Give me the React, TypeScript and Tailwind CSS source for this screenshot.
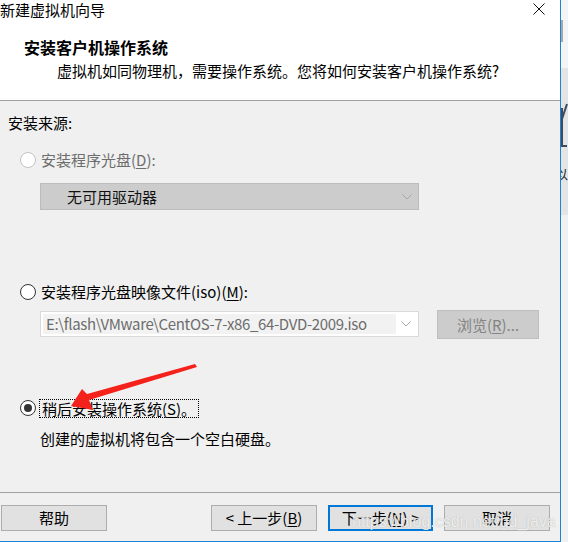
import React from "react";

const U = ({ c }: { c: string }) => <span className="underline underline-offset-2">{c}</span>;

function Radio({ state }: { state: "disabled" | "off" | "on" }) {
  if (state === "disabled")
    return <span className="w-4 h-4 rounded-full border border-[#c4c4c4] bg-white shrink-0" />;
  if (state === "off")
    return <span className="w-4 h-4 rounded-full border border-[#333333] bg-white shrink-0" />;
  return (
    <span className="w-4 h-4 rounded-full border border-[#333333] bg-white shrink-0 flex items-center justify-center">
      <span className="w-2 h-2 rounded-full bg-[#333333]" />
    </span>
  );
}

function Chevron() {
  return (
    <svg width="10" height="6" viewBox="0 0 10 6" className="shrink-0">
      <path d="M0.5 0.5 L5 5 L9.5 0.5" fill="none" stroke="#a8a8a8" strokeWidth="1" />
    </svg>
  );
}

export default function App() {
  return (
    <div
      className="relative w-[568px] h-[542px] flex overflow-hidden bg-[#f0f0f0] text-[15px] text-black"
      style={{ fontFamily: "'Noto Sans CJK SC', 'Noto Sans', sans-serif" }}
    >
      {/* dialog window */}
      <div className="w-[561px] h-[542px] flex flex-col border-r border-b border-[#1883d7] shrink-0">
        {/* header */}
        <div className="h-[100px] bg-white flex flex-col shrink-0">
          <div className="h-[19px] flex items-start justify-between pr-[15px]">
            <span className="leading-[19px]">新建虚拟机向导</span>
            <svg width="12" height="12" viewBox="0 0 12 12" className="mt-[3px]">
              <path d="M0.5 0.5 L11.5 11.5 M11.5 0.5 L0.5 11.5" stroke="#111" strokeWidth="1" fill="none" />
            </svg>
          </div>
          <div className="mt-[18px] pl-[24px] h-[20px] leading-[20px] text-[16px] font-bold">安装客户机操作系统</div>
          <div className="mt-[4px] pl-[57px] h-[20px] leading-[20px]">
            虚拟机如同物理机，需要操作系统。您将如何安装客户机操作系统?
          </div>
        </div>
        <div className="h-px bg-[#a0a0a0] shrink-0" />

        {/* body */}
        <div className="flex-1 flex flex-col">
          <div className="mt-[13px] pl-[8px] h-[18px] leading-[18px]">安装来源:</div>

          <div className="mt-[20px] pl-[20px] h-4 flex items-center gap-[5px]">
            <Radio state="disabled" />
            <span className="leading-[18px] text-[#6d6d6d]">
              安装程序光盘(<U c="D" />):
            </span>
          </div>

          <div className="mt-[15px] ml-[40px] w-[379px] h-[27px] bg-[#cccccc] border border-[#bcbcbc] flex items-center pl-[26px] pr-[6px]">
            <span className="flex-1 leading-[18px] text-[#111]">无可用驱动器</span>
            <Chevron />
          </div>

          <div className="mt-[74px] pl-[20px] h-4 flex items-center gap-[5px]">
            <Radio state="off" />
            <span className="leading-[18px]">
              安装程序光盘映像文件(iso)(<U c="M" />):
            </span>
          </div>

          <div className="mt-[10px] h-[29px] flex items-start">
            <div className="ml-[40px] mt-px w-[379px] h-[26px] border border-[#d9d9d9] bg-white p-[2px] flex">
              <div className="w-[353px] bg-[#f2f2f2] flex items-center pl-[3px] text-[#6d6d6d] leading-[18px] tracking-[-0.35px]">
                E:\flash\VMware\CentOS-7-x86_64-DVD-2009.iso
              </div>
              <div className="flex-1 flex items-center justify-center">
                <Chevron />
              </div>
            </div>
            <div className="ml-[18px] w-[102px] h-[29px] bg-[#cccccc] border border-[#bfbfbf] flex items-center justify-center text-[#838383] leading-[18px]">
              浏览(<U c="R" />)...
            </div>
          </div>

          <div className="mt-[59px] pl-[20px] h-[20px] flex items-center gap-[3px]">
            <Radio state="on" />
            <span className="border border-dotted border-black px-[2px] h-[19px] leading-[17px] flex items-center">
              稍后安装操作系统(<U c="S" />)。
            </span>
          </div>

          <div className="mt-[12px] pl-[40px] h-[18px] leading-[18px]">创建的虚拟机将包含一个空白硬盘。</div>
        </div>

        <div className="h-px bg-[#a0a0a0] shrink-0" />

        {/* buttons */}
        <div className="h-[48px] shrink-0 flex items-start pt-[12px] pl-px">
          <button className="w-[106px] h-[26px] bg-[#e1e1e1] border border-[#adadad] leading-[18px]">帮助</button>
          <button className="ml-[104px] w-[106px] h-[26px] bg-[#e1e1e1] border border-[#adadad] leading-[18px]">
            &lt; 上一步(<U c="B" />)
          </button>
          <button className="ml-[11px] w-[105px] h-[26px] bg-[#e1e1e1] border-2 border-[#0078d7] leading-[18px]">
            下一步(<U c="N" />) &gt;
          </button>
          <button className="ml-[11px] w-[106px] h-[26px] bg-[#e1e1e1] border border-[#adadad] leading-[18px]">取消</button>
        </div>
      </div>

      {/* sliver of the window behind */}
      <div className="relative w-[7px] h-[542px] flex flex-col overflow-hidden">
        <div className="h-[68px] bg-[#f4f4f4] pt-[20px]">
          <div className="w-[2px] h-[22px] bg-[#a8a8a8]" />
        </div>
        <div className="h-[147px] bg-[#e4e4e4] flex flex-col">
          <svg width="7" height="60" viewBox="0 0 7 60" className="mt-[30px]">
            <path d="M0 24 L6 6 M1 10 L1 48 L6 48" stroke="#3d4b5c" strokeWidth="2" fill="none" />
          </svg>
          <span className="mt-[8px] -ml-[6px] text-[13px] leading-[16px] text-[#222]">以</span>
        </div>
        <div className="flex-1 bg-[#f0f0f0]" />
      </div>

      {/* watermark */}
      <span
        className="absolute left-[352px] top-[512px] text-[16px] leading-[20px] text-white/80 pointer-events-none"
        style={{ fontFamily: "'Liberation Sans', Arial, sans-serif", textShadow: "0 0 1px rgba(120,120,120,0.6)" }}
      >
        https://blog.csdn.net/gd_java
      </span>

      {/* red annotation arrow */}
      <svg className="absolute left-0 top-0 pointer-events-none" width="568" height="542" viewBox="0 0 568 542">
        <polygon points="71,406 82,389 87,394 195,364 197,367 89,400 93,410" fill="#f5221b" />
      </svg>
    </div>
  );
}
